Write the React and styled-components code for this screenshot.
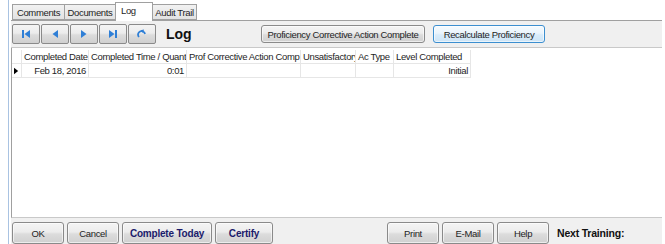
import React from "react";
import styled, { createGlobalStyle } from "styled-components";

const Global = createGlobalStyle`
	html, body {
		margin: 0;
		background: #ffffff;
		font-family: "Liberation Sans", Arial, sans-serif;
		font-size: 9.5px;
		letter-spacing: -0.35px;
		color: #1e1e1e;
	}
`;

const Window = styled.div`
	margin-left: 8px;
	margin-right: 3px;
	height: 244px;
	border-left: 1px solid #a9c3e2;
	padding-left: 2px;
	display: flex;
	flex-direction: column;
	box-sizing: border-box;
	overflow: hidden;
`;

const Tabs = styled.div`
	display: flex;
	align-items: flex-end;
	height: 21px;
	padding-left: 1px;
	box-sizing: border-box;
	border-bottom: 1px solid #a0a0a0;
`;

const Tab = styled.div`
	width: ${(p) => p.$w};
	height: ${(p) => (p.$active ? "19px" : "16px")};
	padding: ${(p) => (p.$active ? "2px 0 0 5px" : "0")};
	margin-bottom: ${(p) => (p.$active ? "-1px" : "0")};
	border: 1px solid #a0a0a0;
	border-bottom: ${(p) => (p.$active ? "none" : "1px solid #a0a0a0")};
	margin-right: -1px;
	background: ${(p) => (p.$active ? "#ffffff" : "linear-gradient(#f2f2f2, #e2e2e2)")};
	display: flex;
	align-items: ${(p) => (p.$active ? "flex-start" : "center")};
	justify-content: ${(p) => (p.$active ? "flex-start" : "center")};
	box-sizing: border-box;
	white-space: nowrap;
	position: relative;
	z-index: ${(p) => (p.$active ? 1 : 0)};
`;

const Toolbar = styled.div`
	height: 27px;
	background: #f0f0f0;
	border-bottom: 1px solid #c9c9c9;
	display: flex;
	align-items: center;
	padding-left: 1px;
	box-sizing: border-box;
`;

const NavGroup = styled.div`
	display: flex;
	gap: 1px;
`;

const NavButton = styled.button`
	width: 28px;
	height: 20px;
	padding: 0;
	border: 1px solid #8a8a8a;
	border-radius: 2px;
	background: linear-gradient(#f4f4f4 0%, #ececec 45%, #dcdcdc 55%, #d0d0d0 100%);
	display: flex;
	align-items: center;
	justify-content: center;
`;

const Title = styled.div`
	font-size: 14px;
	letter-spacing: 0;
	font-weight: bold;
	color: #111;
	margin-left: 10px;
	width: 95px;
`;

const Button = styled.button`
	height: ${(p) => p.$h || "18px"};
	width: ${(p) => p.$w};
	padding: 0;
	margin-right: ${(p) => p.$mr || "3px"};
	border: 1px solid ${(p) => (p.$focus ? "#3c8fd0" : "#8a8a8a")};
	border-radius: 3px;
	background: ${(p) =>
		p.$focus
			? "linear-gradient(#f6fbfe 0%, #eaf4fc 45%, #d9ecfa 55%, #cde4f6 100%)"
			: "linear-gradient(#f4f4f4 0%, #ececec 45%, #dcdcdc 55%, #d0d0d0 100%)"};
	font-family: "Liberation Sans", Arial, sans-serif;
	font-size: ${(p) => (p.$bold ? "10px" : "9.5px")};
	letter-spacing: ${(p) => (p.$bold ? "-0.2px" : "-0.35px")};
	white-space: nowrap;
	font-weight: ${(p) => (p.$bold ? "bold" : "normal")};
	color: ${(p) => (p.$bold ? "#1b1b6b" : "#1e1e1e")};
	box-shadow: inset 0 0 0 1px rgba(255, 255, 255, 0.6);
`;

const GridArea = styled.div`
	flex: 1;
	background: #ffffff;
	border-left: 1px solid #a0a0a0;
	border-bottom: 1px solid #c9c9c9;
	padding-top: 2px;
`;

const Grid = styled.div`
	display: grid;
	grid-template-columns: 10px 67px 98px 114px 55px 38px 77px;
	width: max-content;
`;

const Cell = styled.div`
	height: 14px;
	padding: 0 2px;
	white-space: nowrap;
	overflow: hidden;
	border-right: 1px solid #e6e6e6;
	border-bottom: 1px solid #e6e6e6;
	box-sizing: border-box;
	color: #1e1e1e;
	display: flex;
	align-items: center;
	justify-content: ${(p) => (p.$align === "right" ? "flex-end" : "flex-start")};
`;

const Footer = styled.div`
	height: 26px;
	background: #f0f0f0;
	display: flex;
	align-items: flex-end;
	padding-left: 1px;
	box-sizing: border-box;
`;

const Spacer = styled.div`
	flex: 1;
`;

const NextLabel = styled.div`
	width: 105px;
	align-self: center;
	margin-top: 3px;
	margin-left: 5px;
	font-size: 10.5px;
	letter-spacing: -0.2px;
	font-weight: bold;
	color: #111;
	white-space: nowrap;
`;

const blue = "#2f7fd6";

const IconFirst = () => (
	<svg width="10" height="8" viewBox="0 0 10 8">
		<rect x="1" y="0" width="2" height="8" fill={blue} />
		<polygon points="9,0 9,8 3.5,4" fill={blue} />
	</svg>
);
const IconPrev = () => (
	<svg width="8" height="8" viewBox="0 0 8 8">
		<polygon points="7,0 7,8 1.5,4" fill={blue} />
	</svg>
);
const IconNext = () => (
	<svg width="8" height="8" viewBox="0 0 8 8">
		<polygon points="1,0 1,8 6.5,4" fill={blue} />
	</svg>
);
const IconLast = () => (
	<svg width="10" height="8" viewBox="0 0 10 8">
		<polygon points="1,0 1,8 6.5,4" fill={blue} />
		<rect x="7" y="0" width="2" height="8" fill={blue} />
	</svg>
);
const IconRefresh = () => (
	<svg width="10" height="10" viewBox="0 0 10 10">
		<path d="M2 8 A3.5 3.5 0 1 1 8 5" fill="none" stroke={blue} strokeWidth="1.8" />
		<polygon points="3.5,1.2 7,0.5 6,4" fill={blue} />
	</svg>
);

const RowArrow = () => (
	<svg width="6" height="8" viewBox="0 0 6 8">
		<polygon points="0,0 0,8 5,4" fill="#000" />
	</svg>
);

const headers = [
	"Completed Date",
	"Completed Time / Quant",
	"Prof Corrective Action Comp",
	"Unsatisfactory",
	"Ac Type",
	"Level Completed",
];

const App = () => {
	return (
		<>
			<Global />
			<Window>
				<Tabs>
					<Tab $w="53px">Comments</Tab>
					<Tab $w="52px">Documents</Tab>
					<Tab $w="38px" $active>Log</Tab>
					<Tab $w="45px">Audit Trail</Tab>
				</Tabs>
				<Toolbar>
					<NavGroup>
						<NavButton><IconFirst /></NavButton>
						<NavButton><IconPrev /></NavButton>
						<NavButton><IconNext /></NavButton>
						<NavButton><IconLast /></NavButton>
						<NavButton><IconRefresh /></NavButton>
					</NavGroup>
					<Title>Log</Title>
					<Button $w="164px" $mr="8px">Proficiency Corrective Action Complete</Button>
					<Button $w="112px" $focus>Recalculate Proficiency</Button>
				</Toolbar>
				<GridArea>
					<Grid>
						<Cell />
						{headers.map((h) => (
							<Cell key={h}>{h}</Cell>
						))}
						<Cell><RowArrow /></Cell>
						<Cell $align="right">Feb 18, 2016</Cell>
						<Cell $align="right">0:01</Cell>
						<Cell />
						<Cell />
						<Cell />
						<Cell $align="right">Initial</Cell>
					</Grid>
				</GridArea>
				<Footer>
					<Button $w="52px" $h="22px">OK</Button>
					<Button $w="52px" $h="22px">Cancel</Button>
					<Button $w="90px" $h="22px" $bold>Complete Today</Button>
					<Button $w="58px" $h="22px" $bold>Certify</Button>
					<Spacer />
					<Button $w="52px" $h="22px">Print</Button>
					<Button $w="52px" $h="22px">E-Mail</Button>
					<Button $w="52px" $h="22px">Help</Button>
					<NextLabel>Next Training:</NextLabel>
				</Footer>
			</Window>
		</>
	);
};

export default App;
